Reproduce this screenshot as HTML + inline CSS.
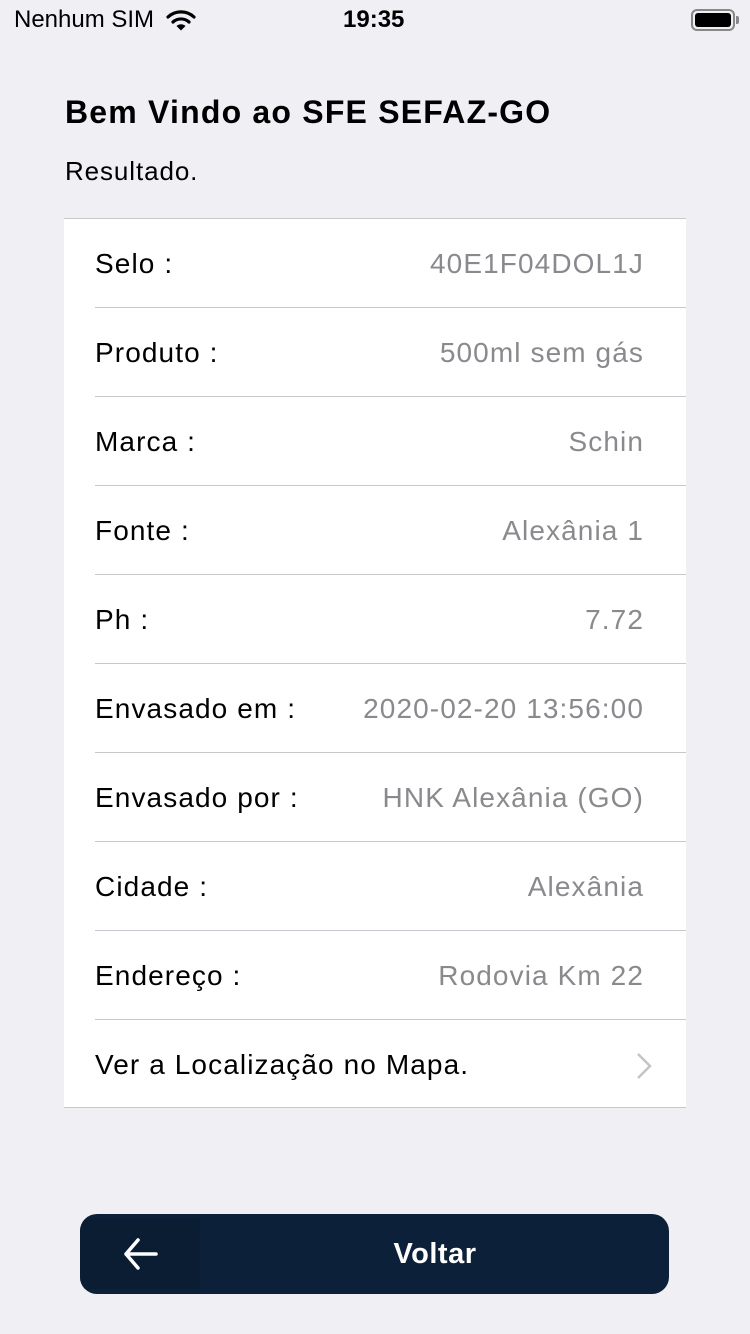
<!DOCTYPE html>
<html><head><meta charset="utf-8"><style>
*{margin:0;padding:0;box-sizing:border-box}
body{width:750px;height:1334px;background:#f0eff4;font-family:"Liberation Sans",sans-serif;position:relative;overflow:hidden;color:#000}
.sb{position:absolute;top:6px;font-size:24px}
h1{position:absolute;left:65px;top:94px;font-size:32px;font-weight:bold;letter-spacing:1.2px}
.sub{position:absolute;left:65px;top:156px;font-size:26px;letter-spacing:0.9px}
.card{position:absolute;left:64px;top:218px;width:622px;height:890px;background:#fff;border-top:1px solid #c8c7cc;border-bottom:1px solid #c8c7cc}
.row{position:absolute;left:31px;right:0;height:89px;font-size:28px;line-height:89px;letter-spacing:1.1px}
.row.sep{border-bottom:1px solid #c8c7cc}
.row .v{position:absolute;right:42px;top:0;color:#8a8a8e}
.btn{position:absolute;left:80px;top:1214px;width:589px;height:80px;background:#0c2139;border-radius:17px;overflow:hidden}
.btn .l{position:absolute;left:0;top:5px;width:120px;height:70px;background:#0a1d32}
.btn .t{position:absolute;left:355px;width:200px;margin-left:-100px;text-align:center;top:0;line-height:80px;color:#fff;font-size:29px;font-weight:bold;letter-spacing:0.5px}
</style></head><body>
<div class="sb" style="left:14px">Nenhum SIM</div>
<svg style="position:absolute;left:166px;top:9px" width="30" height="22" viewBox="0 0 30 22"><path d="M2 8a19 19 0 0 1 26 0" stroke="#000" stroke-width="3.2" fill="none" stroke-linecap="round"/><path d="M7 13a12 12 0 0 1 16 0" stroke="#000" stroke-width="3.2" fill="none" stroke-linecap="round"/><path d="M10.5 17l4.5 4.5 4.5-4.5a6.5 6.5 0 0 0-9 0z" fill="#000"/></svg>
<div class="sb" style="left:343px;font-weight:bold">19:35</div>
<div style="position:absolute;left:691px;top:9px;width:44px;height:22px;border:2px solid #888;border-radius:6px;padding:2px"><div style="width:100%;height:100%;background:#000;border-radius:3px"></div></div>
<div style="position:absolute;left:736px;top:16px;width:3px;height:8px;background:#888;border-radius:0 2px 2px 0"></div>
<h1>Bem Vindo ao SFE SEFAZ-GO</h1>
<div class="sub">Resultado.</div>
<div class="card">
<div class="row sep" style="top:0">Selo :<span class="v">40E1F04DOL1J</span></div>
<div class="row sep" style="top:89px">Produto :<span class="v">500ml sem gás</span></div>
<div class="row sep" style="top:178px">Marca :<span class="v">Schin</span></div>
<div class="row sep" style="top:267px">Fonte :<span class="v">Alexânia 1</span></div>
<div class="row sep" style="top:356px">Ph :<span class="v">7.72</span></div>
<div class="row sep" style="top:445px">Envasado em :<span class="v">2020-02-20 13:56:00</span></div>
<div class="row sep" style="top:534px">Envasado por :<span class="v">HNK Alexânia (GO)</span></div>
<div class="row sep" style="top:623px">Cidade :<span class="v">Alexânia</span></div>
<div class="row sep" style="top:712px">Endereço :<span class="v">Rodovia Km 22</span></div>
<div class="row" style="top:801px">Ver a Localização no Mapa.
<svg style="position:absolute;right:34px;top:32px" width="16" height="28" viewBox="0 0 16 28"><path d="M2 2l12 12-12 12" stroke="#c4c4c7" stroke-width="2.5" fill="none"/></svg></div>
</div>
<div class="btn"><div class="l"></div>
<svg style="position:absolute;left:42px;top:23px" width="36" height="34" viewBox="0 0 36 34"><path d="M34 17H4M16 3L4 17l12 14" stroke="#fff" stroke-width="3.5" fill="none" stroke-linecap="round" stroke-linejoin="round"/></svg>
<div class="t">Voltar</div></div>
</body></html>
